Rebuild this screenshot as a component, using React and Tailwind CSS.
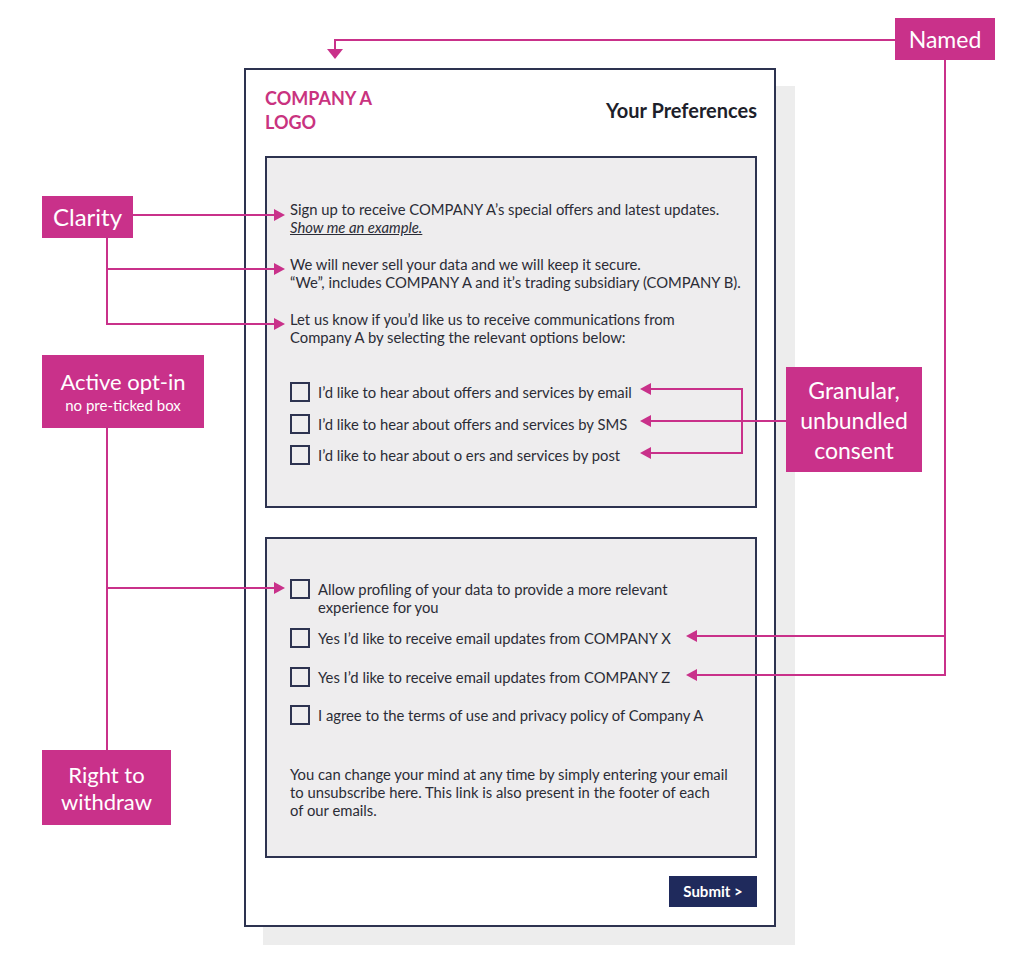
import React from "react";

const pink = "#c9318a";
const font = { fontFamily: "Lato, 'Noto Sans', sans-serif" };

const Box = () => (
  <span className="block h-[20px] w-[20px] shrink-0 border-2 border-[#2d3350]" />
);

const Check = ({ children, className = "" }) => (
  <div className={"flex items-start gap-[8px] " + className}>
    <Box />
    <p className="leading-[18px] pt-[1px]">{children}</p>
  </div>
);

const Label = ({ className, children }) => (
  <div className={"absolute flex flex-col items-center justify-center bg-[#c9318a] text-center text-white " + className}>
    {children}
  </div>
);

const right = (x, y) => `${x - 11},${y - 6} ${x},${y} ${x - 11},${y + 6}`;
const left = (x, y) => `${x + 11},${y - 6} ${x},${y} ${x + 11},${y + 6}`;

const Arrows = () => (
  <svg className="pointer-events-none absolute left-0 top-0" width="1024" height="968" viewBox="0 0 1024 968">
    <g stroke={pink} strokeWidth="2" fill="none">
      <polyline points="895,40 335,40 335,50" />
      <polyline points="945,60 945,675 697,675" />
      <line x1="945" y1="636" x2="697" y2="636" />
      <line x1="786" y1="421" x2="651" y2="421" />
      <polyline points="651,389 742,389 742,453 651,453" />
      <line x1="133" y1="215" x2="274" y2="215" />
      <polyline points="107,238 107,324 274,324" />
      <line x1="107" y1="269" x2="274" y2="269" />
      <line x1="107" y1="428" x2="107" y2="750" />
      <line x1="107" y1="588" x2="274" y2="588" />
    </g>
    <g fill={pink}>
      <polygon points="327,49 343,49 335,59" />
      <polygon points={left(686, 636)} />
      <polygon points={left(686, 675)} />
      <polygon points={left(640, 389)} />
      <polygon points={left(640, 421)} />
      <polygon points={left(640, 453)} />
      <polygon points={right(285, 215)} />
      <polygon points={right(285, 269)} />
      <polygon points={right(285, 324)} />
      <polygon points={right(285, 588)} />
    </g>
  </svg>
);

export default function App() {
  return (
    <div className="relative h-[968px] w-[1024px] overflow-hidden bg-white" style={font}>
      <div className="pl-[244px] pt-[68px]">
        <div className="w-[532px] border-2 border-[#2d3350] bg-white pb-[18px] pl-[19px] pr-[17px] pt-[16px] shadow-[19px_18px_0_0_#ededed]">
          <header className="flex h-[48px] items-center justify-between">
            <div className="text-[18px] font-bold leading-[24px] text-[#c9337f]">
              COMPANY A
              <br />
              LOGO
            </div>
            <h1 className="text-[20px] font-bold text-[#1e1f2b]">Your Preferences</h1>
          </header>

          <section className="mt-[22px] h-[352px] border-2 border-[#2d3350] bg-[#eeedee] pl-[23px] pt-[42px] text-[14.8px] text-[#2b2c36]">
            <p className="leading-[18px]">
              Sign up to receive COMPANY A’s special offers and latest updates.
              <br />
              <span className="italic underline">Show me an example.</span>
            </p>
            <p className="mt-[19px] leading-[18px]">
              We will never sell your data and we will keep it secure.
              <br />
              “We”, includes COMPANY A and it’s trading subsidiary (COMPANY B).
            </p>
            <p className="mt-[19px] leading-[18px]">
              Let us know if you’d like us to receive communications from
              <br />
              Company A by selecting the relevant options below:
            </p>
            <div className="mt-[36px] flex flex-col gap-[11.5px]">
              <Check>I’d like to hear about offers and services by email</Check>
              <Check>I’d like to hear about offers and services by SMS</Check>
              <Check>I’d like to hear about o ers and services by post</Check>
            </div>
          </section>

          <section className="mt-[29px] h-[321px] border-2 border-[#2d3350] bg-[#eeedee] pl-[23px] pt-[40px] text-[14.8px] text-[#2b2c36]">
            <Check>
              Allow profiling of your data to provide a more relevant
              <br />
              experience for you
            </Check>
            <Check className="mt-[12px]">Yes I’d like to receive email updates from COMPANY X</Check>
            <Check className="mt-[19px]">Yes I’d like to receive email updates from COMPANY Z</Check>
            <Check className="mt-[18px]">I agree to the terms of use and privacy policy of Company A</Check>
            <p className="mt-[40px] leading-[18px]">
              You can change your mind at any time by simply entering your email
              <br />
              to unsubscribe here. This link is also present in the footer of each
              <br />
              of our emails.
            </p>
          </section>

          <div className="mt-[18px] flex justify-end">
            <button className="h-[31px] w-[88px] bg-[#1f2a5c] text-[15px] font-bold text-white">Submit &gt;</button>
          </div>
        </div>
      </div>

      <Arrows />

      <Label className="left-[895px] top-[18px] h-[42px] w-[100px] text-[23px]">Named</Label>
      <Label className="left-[42px] top-[196px] h-[42px] w-[91px] text-[24px]">Clarity</Label>
      <Label className="left-[42px] top-[355px] h-[73px] w-[162px]">
        <span className="text-[22px] leading-[26px]">Active opt-in</span>
        <span className="text-[15px] leading-[20px]">no pre-ticked box</span>
      </Label>
      <Label className="left-[42px] top-[750px] h-[75px] w-[129px] text-[22px] leading-[27px]">
        Right to
        <br />
        withdraw
      </Label>
      <Label className="left-[786px] top-[367px] h-[105px] w-[136px] text-[23px] leading-[30px]">
        Granular,
        <br />
        unbundled
        <br />
        consent
      </Label>
    </div>
  );
}
